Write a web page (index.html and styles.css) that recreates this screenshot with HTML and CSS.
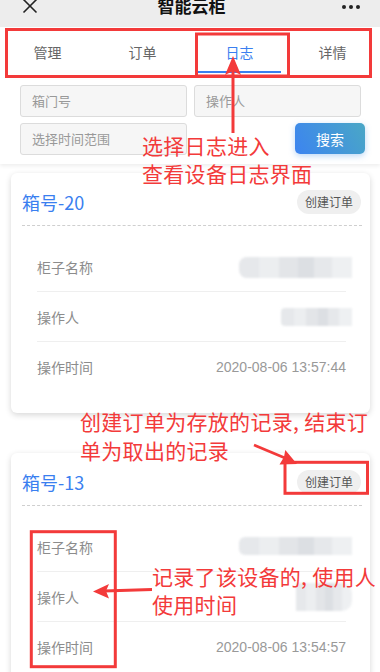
FILE: index.html
```html
<!DOCTYPE html>
<html lang="zh-CN">
<head>
<meta charset="utf-8">
<title>智能云柜</title>
<link rel="stylesheet" href="styles.css">
</head>
<body>
<div class="page">
  <header class="navbar">
    <div class="nav-inner">
      <svg class="nav-close" width="16" height="16" viewBox="0 0 16 16"><path d="M1.5 1.5 L14.5 14.5 M14.5 1.5 L1.5 14.5" stroke="#222" stroke-width="1.6" fill="none"/></svg>
      <div class="nav-title">智能云柜</div>
      <svg class="nav-more" width="20" height="6" viewBox="0 0 20 6"><circle cx="3" cy="3" r="2" fill="#222"/><circle cx="10" cy="3" r="2" fill="#222"/><circle cx="17" cy="3" r="2" fill="#222"/></svg>
    </div>
  </header>

  <nav class="tabs">
    <div class="tab"><span>管理</span></div>
    <div class="tab"><span>订单</span></div>
    <div class="tab active"><span>日志</span><i class="tab-line"></i></div>
    <div class="tab"><span>详情</span></div>
  </nav>

  <section class="search">
    <div class="search-row">
      <div class="field">箱门号</div>
      <div class="field">操作人</div>
    </div>
    <div class="search-row">
      <div class="field">选择时间范围</div>
      <div class="spacer"></div>
      <button class="search-btn">搜索</button>
    </div>
  </section>

  <main class="list">
    <article class="card">
      <div class="card-head">
        <span class="box-no">箱号-20</span>
        <span class="badge">创建订单</span>
      </div>
      <div class="card-body">
        <div class="row"><span class="label">柜子名称</span><span class="blur blur-long"></span></div>
        <div class="row"><span class="label">操作人</span><span class="blur blur-short"></span></div>
        <div class="row"><span class="label">操作时间</span><span class="value">2020-08-06 13:57:44</span></div>
      </div>
    </article>

    <article class="card">
      <div class="card-head">
        <span class="box-no">箱号-13</span>
        <span class="badge">创建订单</span>
      </div>
      <div class="card-body">
        <div class="row"><span class="label">柜子名称</span><span class="blur blur-long2"></span></div>
        <div class="row"><span class="label">操作人</span><span class="blur blur-tall"></span></div>
        <div class="row"><span class="label">操作时间</span><span class="value">2020-08-06 13:54:57</span></div>
      </div>
    </article>
  </main>

  <svg class="marks" width="380" height="672" viewBox="0 0 380 672">
    <g fill="none" stroke="#f33a3a" stroke-width="3">
      <rect x="6.5" y="29.5" width="364" height="47"/>
      <rect x="196.5" y="34" width="92" height="42"/>
      <rect x="285" y="462.3" width="82.5" height="31"/>
      <rect x="31.3" y="531.7" width="84" height="135"/>
    </g>
    <g stroke="#f33a3a" fill="#f33a3a">
      <line x1="233" y1="133" x2="233" y2="70" stroke-width="3"/>
      <polygon points="233,56 225,75 233,71 241,75" stroke="none"/>
      <line x1="254" y1="445" x2="285" y2="458" stroke-width="2.6"/>
      <polygon points="297,464 279.5,464.5 284,457 285.3,450" stroke="none"/>
      <line x1="152" y1="589.5" x2="104" y2="591" stroke-width="3"/>
      <polygon points="93,591.5 109,584 106,591 109,598.5" stroke="none"/>
    </g>
  </svg>

  <div class="note note-1">选择日志进入<br>查看设备日志界面</div>
  <div class="note note-2">创建订单为存放的记录, 结束订<br>单为取出的记录</div>
  <div class="note note-3">记录了该设备的, 使用人<br>使用时间</div>
</div>
</body>
</html>
```

FILE: styles.css
```css
* { box-sizing: border-box; }
html, body { margin: 0; padding: 0; }
body {
  background: #ffffff;
  font-family: "Noto Sans CJK SC", "Liberation Sans", sans-serif;
  width: 380px;
  height: 672px;
  overflow: hidden;
}
.page {
  position: relative;
  width: 380px;
  height: 672px;
  overflow: hidden;
  background: #fff;
}

/* nav bar (top clipped) */
.navbar {
  height: 27px;
  background: #ededed;
  display: flex;
  align-items: flex-end;
  overflow: hidden;
}
.nav-inner {
  height: 44px;
  width: 100%;
  flex-shrink: 0;
  display: grid;
  grid-template-columns: 1fr auto 1fr;
  align-items: center;
  padding: 0 19px 0 22px;
}
.nav-close { justify-self: start; margin-top: 1px; }
.nav-title {
  font-size: 17px;
  font-weight: 600;
  color: #111;
  line-height: 22px;
  margin-top: 2px;
}
.nav-more { justify-self: end; margin-top: 3px; }

/* tabs */
.tabs {
  height: 51px;
  background: #fff;
  display: grid;
  grid-template-columns: repeat(4, 1fr);
}
.tab {
  display: flex;
  flex-direction: column;
  align-items: center;
  padding-top: 15px;
  font-size: 14px;
  color: #666;
}
.tab span { line-height: 20px; }
.tab.active { color: #3a7ff0; padding-left: 4px; }
.tab-line {
  display: block;
  width: 83px;
  height: 2px;
  margin-top: 9px;
  background: #3a7ff0;
}

/* search */
.search {
  background: #fff;
  padding: 7px 15px 9px 20px;
  display: flex;
  flex-direction: column;
  gap: 6px;
  box-shadow: 0 2px 4px rgba(0, 0, 0, 0.07);
  position: relative;
  z-index: 1;
}
.search-row {
  display: flex;
  gap: 7px;
}
.field {
  width: 167px;
  height: 32px;
  border: 1px solid #dcdcdc;
  border-radius: 3px;
  background: #f6f6f6;
  color: #999;
  font-size: 13px;
  line-height: 30px;
  padding-left: 11px;
}
.spacer { flex: 1; }
.search-btn {
  width: 70px;
  height: 31px;
  border: none;
  border-radius: 5px;
  background: linear-gradient(60deg, #3c84f0 0%, #4aa7c6 100%);
  color: #fff;
  font-family: "Noto Sans CJK SC", sans-serif;
  font-size: 14px;
  box-shadow: 0 2px 6px rgba(60, 140, 230, 0.35);
  padding: 0;
}

/* list */
.list {
  padding: 9px 10px 0 11px;
  display: flex;
  flex-direction: column;
  gap: 40px;
}
.card {
  background: #fff;
  border-radius: 6px;
  box-shadow: 0 2px 6px rgba(0, 0, 0, 0.16);
  padding: 0 8px 21px 11px;
}
.card-head {
  display: flex;
  align-items: center;
  justify-content: space-between;
  height: 24px;
  margin-top: 17px;
  margin-bottom: 11px;
}
.box-no {
  color: #3a7ff0;
  font-size: 18px;
  line-height: 24px;
}
.badge {
  height: 24px;
  line-height: 24px;
  border-radius: 12px;
  background: #efefef;
  color: #555;
  font-size: 12px;
  padding: 0 8px;
  margin-right: 1px;
}
.card-body {
  border-top: 1px dashed #cfcfcf;
  padding: 16px 16px 0 15px;
}
.row {
  height: 50px;
  display: flex;
  align-items: center;
  justify-content: space-between;
  border-bottom: 1px solid #efefef;
}
.row:last-child { border-bottom: none; }
.label {
  font-size: 14px;
  color: #8c8c8c;
}
.value {
  font-family: "Liberation Sans", Arial, sans-serif;
  font-size: 14px;
  color: #999;
}
.blur {
  display: block;
  margin-right: -6px;
  filter: blur(1.2px);
  background: linear-gradient(90deg, #e6e8eb 0 18%, #eceef0 18% 35%, #e3e5e8 35% 52%, #dcdfe3 52% 66%, #e6e8eb 66% 82%, #eef0f2 82% 100%);
}
.blur-long { width: 113px; height: 21px; border-radius: 8px 0 0 8px; margin-top: 2px; }
.blur-short { width: 71px; height: 18px; border-radius: 4px 0 0 4px; }
.blur-long2 { width: 113px; height: 18px; border-radius: 6px 0 0 6px; margin-top: -2px; }
.blur-tall { width: 56px; height: 28px; border-radius: 0 10px 10px 0; }

/* annotations overlay */
.marks {
  position: absolute;
  left: 0;
  top: 0;
  pointer-events: none;
  z-index: 5;
}
.note {
  position: absolute;
  z-index: 6;
  color: #f33a3a;
  font-family: "Noto Sans CJK SC", sans-serif;
  font-size: 21px;
  white-space: nowrap;
  letter-spacing: 0.3px;
}
.note-1 { left: 142px; top: 131px; line-height: 28px; }
.note-2 { left: 80px; top: 407px; line-height: 29px; }
.note-3 { left: 152px; top: 562px; line-height: 28px; }
```
